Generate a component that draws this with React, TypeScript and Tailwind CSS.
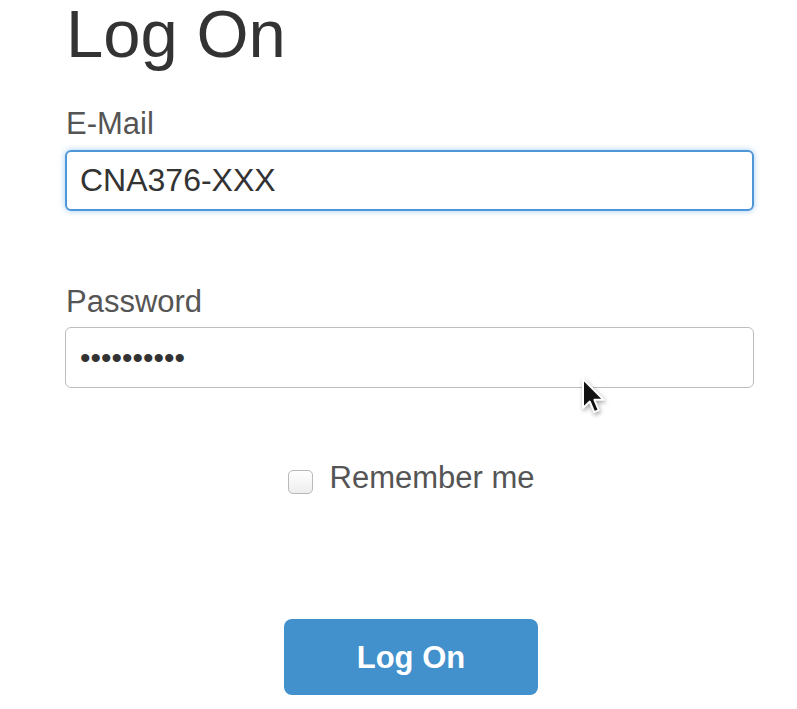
import React from "react";

const font = { fontFamily: '"Liberation Sans", Arial, Helvetica, sans-serif' };

function Cursor() {
  return (
    <svg
      className="absolute left-[581px] top-[377px] drop-shadow-[1px_2px_2px_rgba(0,0,0,0.35)]"
      width="26"
      height="40"
      viewBox="0 0 13 20"
    >
      <path
        d="M1 1 L1 15.5 L4.4 12.3 L6.6 17.6 L8.9 16.6 L6.7 11.4 L11.3 11.4 Z"
        fill="#111"
        stroke="#fff"
        strokeWidth="1"
        strokeLinejoin="round"
      />
    </svg>
  );
}

export default function App() {
  return (
    <div className="relative w-[797px] h-[709px] bg-white overflow-hidden" style={font}>
      <div className="ml-[65px] w-[689px] flex flex-col">
        <h1 className="text-[67px] leading-none text-[#333] pl-[1px]">Log On</h1>

        <label className="mt-[35px] text-[31px] leading-[44px] text-[#555] pl-[1px]">E-Mail</label>
        <input
          readOnly
          defaultValue="CNA376-XXX"
          className="mt-[4px] h-[61px] w-full rounded-[6px] border-2 border-[#4f96d9] px-[13px] text-[32px] text-[#333] outline-none shadow-[0_0_6px_rgba(102,175,233,0.6)]"
          style={font}
        />

        <label className="mt-[69px] text-[31px] leading-[44px] text-[#555] pl-[1px]">Password</label>
        <input
          readOnly
          type="password"
          defaultValue="abcdefghij"
          className="mt-[3px] h-[61px] w-full rounded-[6px] border border-[#bdbdbd] px-[14px] text-[30px] text-[#333] outline-none"
          style={font}
        />

        <div className="mt-[68px] flex items-center justify-center gap-[17px] pl-[3px]">
          <div className="mt-2 h-[24px] w-[25px] rounded-[5px] border border-[#b9b9b9] bg-gradient-to-b from-white to-[#ededed]" />
          <span className="text-[31px] leading-[44px] text-[#555]">Remember me</span>
        </div>

        <div className="mt-[119px] flex justify-center pl-[3px]">
          <button className="h-[76px] w-[254px] rounded-[8px] bg-[#4290cc] pt-[3px] text-[31px] font-bold text-white">
            Log On
          </button>
        </div>
      </div>
      <Cursor />
    </div>
  );
}
